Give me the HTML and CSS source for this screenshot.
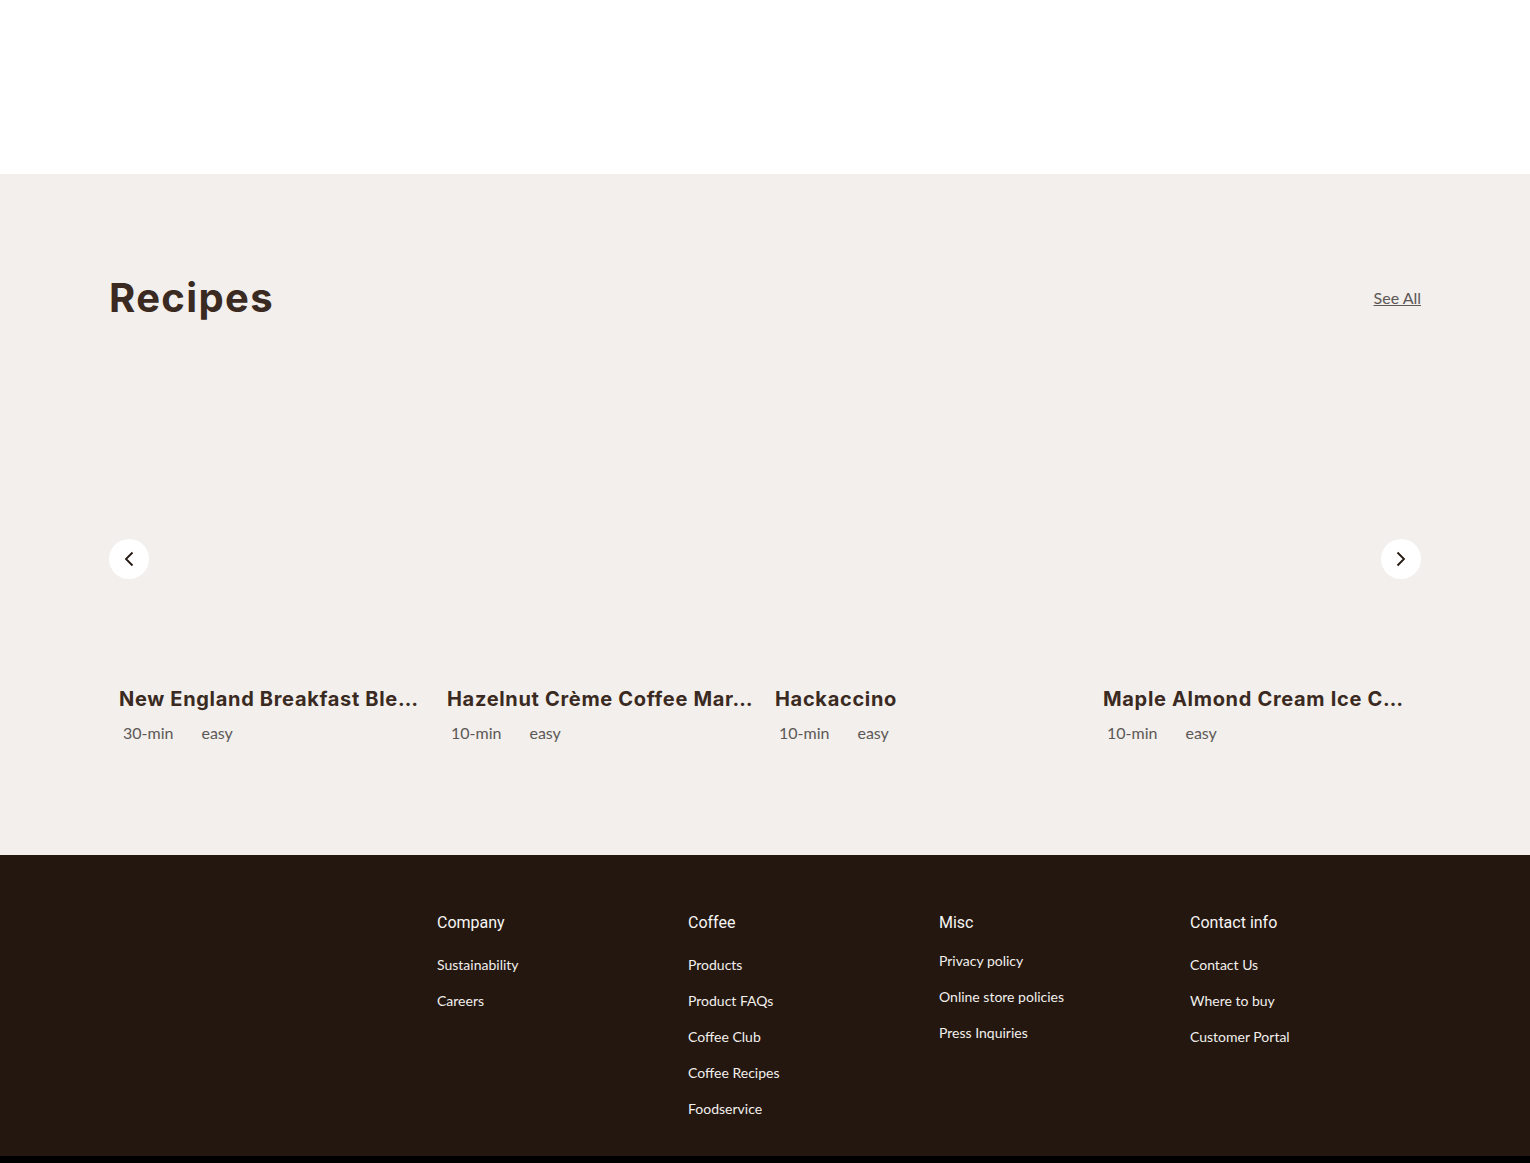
FILE: index.html
```html
<!DOCTYPE html>
<html lang="en">
<head>
<meta charset="utf-8">
<title>Recipes</title>
<link rel="stylesheet" href="styles.css">
</head>
<body>
<div class="top-space"></div>
<section class="recipes">
  <div class="recipes-head">
    <h2 class="recipes-title">Recipes</h2>
    <a class="see-all" href="#">See All</a>
  </div>
  <div class="carousel">
    <div class="card">
      <div class="card-image"></div>
      <h3 class="card-title">New England Breakfast Ble…</h3>
      <div class="card-meta"><span>30-min</span><span>easy</span></div>
    </div>
    <div class="card">
      <div class="card-image"></div>
      <h3 class="card-title">Hazelnut Crème Coffee Mar…</h3>
      <div class="card-meta"><span>10-min</span><span>easy</span></div>
    </div>
    <div class="card">
      <div class="card-image"></div>
      <h3 class="card-title">Hackaccino</h3>
      <div class="card-meta"><span>10-min</span><span>easy</span></div>
    </div>
    <div class="card">
      <div class="card-image"></div>
      <h3 class="card-title">Maple Almond Cream Ice C…</h3>
      <div class="card-meta"><span>10-min</span><span>easy</span></div>
    </div>
    <button class="arrow arrow-prev" aria-label="Previous">
      <svg width="12" height="16" viewBox="0 0 12 16"><path d="M9.500 1.500 3 8l6.500 6.500" fill="none" stroke="#231710" stroke-width="1.800"/></svg>
    </button>
    <button class="arrow arrow-next" aria-label="Next">
      <svg width="12" height="16" viewBox="0 0 12 16"><path d="M2.500 1.500 9 8l-6.500 6.500" fill="none" stroke="#231710" stroke-width="1.800"/></svg>
    </button>
  </div>
</section>
<footer class="footer">
  <div class="footer-brand"></div>
  <div class="footer-col">
    <h4 class="footer-heading">Company</h4>
    <ul class="footer-links">
      <li><a href="#">Sustainability</a></li>
      <li><a href="#">Careers</a></li>
    </ul>
  </div>
  <div class="footer-col">
    <h4 class="footer-heading">Coffee</h4>
    <ul class="footer-links">
      <li><a href="#">Products</a></li>
      <li><a href="#">Product FAQs</a></li>
      <li><a href="#">Coffee Club</a></li>
      <li><a href="#">Coffee Recipes</a></li>
      <li><a href="#">Foodservice</a></li>
    </ul>
  </div>
  <div class="footer-col">
    <h4 class="footer-heading">Misc</h4>
    <ul class="footer-links footer-links-tight">
      <li><a href="#">Privacy policy</a></li>
      <li><a href="#">Online store policies</a></li>
      <li><a href="#">Press Inquiries</a></li>
    </ul>
  </div>
  <div class="footer-col">
    <h4 class="footer-heading">Contact info</h4>
    <ul class="footer-links">
      <li><a href="#">Contact Us</a></li>
      <li><a href="#">Where to buy</a></li>
      <li><a href="#">Customer Portal</a></li>
    </ul>
  </div>
</footer>
<div class="bottom-bar"></div>
</body>
</html>
```
FILE: styles.css
```css
* { box-sizing: border-box; }
html, body { margin: 0; padding: 0; }
body { background: #000; font-family: "Lato", "Liberation Sans", sans-serif; }

.top-space { height: 174px; background: #fff; }

.recipes { height: 681px; background: #f2efec; padding: 98px 109px 0; }
.recipes-head { display: flex; justify-content: space-between; align-items: center; height: 52px; }
.recipes-title { margin: 0; font-family: "Inter", "Liberation Sans", sans-serif; font-weight: 700; font-size: 40px; line-height: 52px; letter-spacing: 1.35px; color: #3a2a22; }
.see-all { font-size: 16px; line-height: 20px; color: #5c5856; }

.carousel { position: relative; display: grid; grid-template-columns: repeat(4, 328px); }
.card { padding: 0 10px; min-width: 0; }
.card-image { height: 361px; }
.card-title { margin: 0; width: 308px; font-family: "Inter", "Liberation Sans", sans-serif; font-weight: 700; font-size: 20px; line-height: 28px; letter-spacing: 0.68px; color: #3a2a22; white-space: nowrap; }
.card-meta { display: flex; gap: 28px; padding-left: 4px; margin-top: 8px; font-size: 16px; line-height: 24px; color: #5c5856; }

.arrow { position: absolute; top: 215px; width: 40px; height: 40px; padding: 0; border: 0; border-radius: 50%; background: #fff; display: flex; align-items: center; justify-content: center; }
.arrow-prev { left: 0; }
.arrow-next { right: 0; }

.footer { height: 301px; background: #231710; padding: 58px 109px 0; display: grid; grid-template-columns: 328px 251px 251px 251px 231px; color: #fff; }
.footer-heading { margin: 0; font-family: "Roboto", "Liberation Sans", sans-serif; font-weight: 400; font-size: 16px; line-height: 20px; color: #f7f5f3; }
.footer-links { list-style: none; margin: 22px 0 0; padding: 0; display: flex; flex-direction: column; gap: 16px; font-size: 14px; line-height: 20px; }
.footer-links-tight { margin-top: 18px; }
.footer-links a { color: #f2efec; text-decoration: none; }

.bottom-bar { height: 7px; background: #000; }
```
